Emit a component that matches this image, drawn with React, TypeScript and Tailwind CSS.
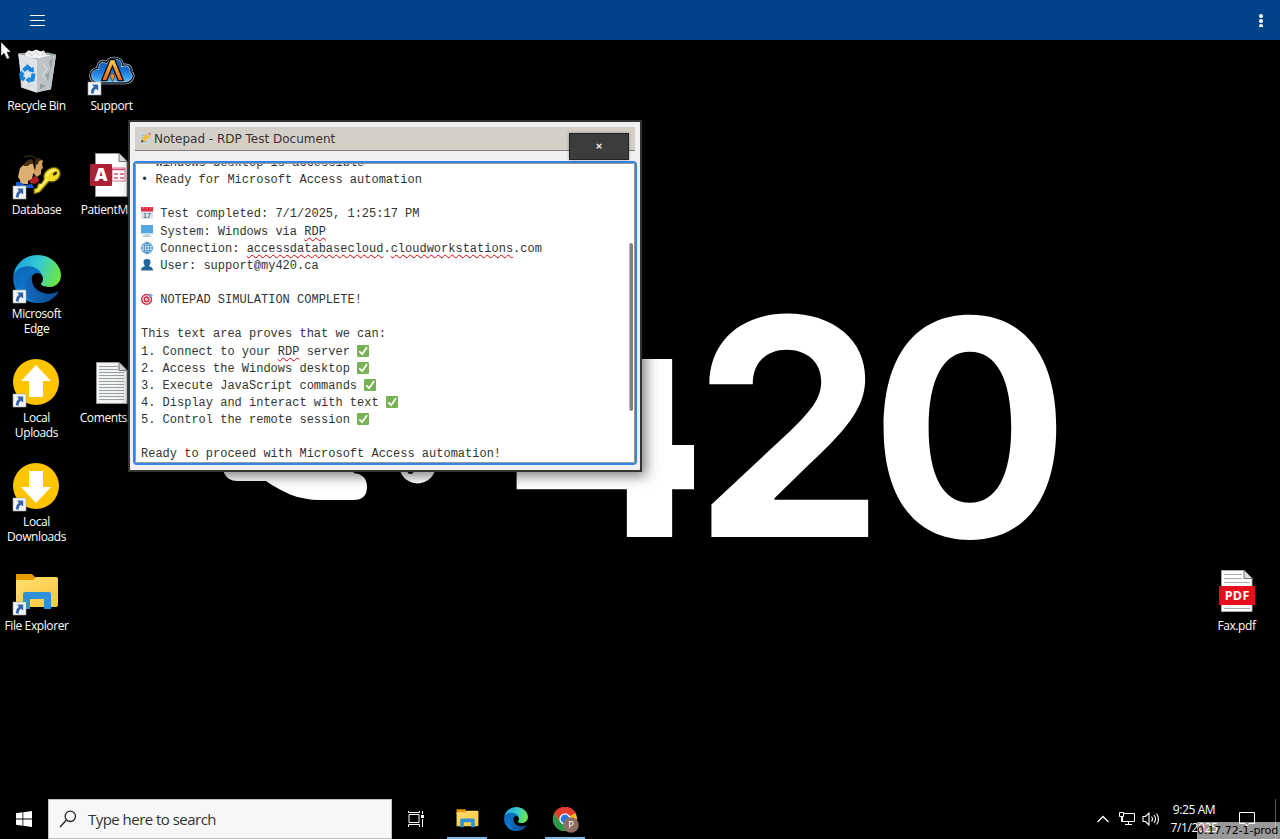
import React, { ReactNode } from "react";

const UI = "font-['Open_Sans','Noto_Sans',sans-serif]";

function Shortcut() {
  return (
    <g>
      <rect x="0" y="34" width="13" height="13" fill="#f4f6f9" stroke="#9aa0a6" strokeWidth=".6" />
      <path d="M4 36.5h6.2v6.2l-2.2-2c-1.8 1.2-2.3 2.6-2.2 4.8H3.2c-.5-3 .5-5.200 2.800-6.800z" fill="#2f64a8" />
    </g>
  );
}

function Icon({ children, size = 48 }: { children: ReactNode; size?: number }) {
  return (
    <svg width={size} height={size} viewBox="0 0 48 48" className="block shrink-0 overflow-visible">
      {children}
    </svg>
  );
}

function RecycleBin() {
  return (
    <Icon>
      <g transform="translate(1 1.500)">
        <path d="M5 5l6-1 3-3 6 1 4-1 5 2 6 1 7 2-5 34-15 3-15-5z" fill="#c9ced1" />
        <path d="M4 4l19 5v34L9 38z" fill="#dfe3e5" />
        <path d="M23 9l19-4-5 33-14 5z" fill="#bcc2c5" />
        <path d="M4 4l10-1 8 1 12-1 8 2-19 5z" fill="#9da4a8" />
        <path d="M11 4l4-3 3 1 4-2 4 2 4-1 2 4 5 1-12 3-9-1-5-2z" fill="#f1f3f4" />
        <path d="M14 3l4 3 4-4 3 4M30 2l-2 4" stroke="#c3c9cc" fill="none" />
        <path d="M29 14l4 6-5 6 5 4M8 12l5 2-3 4M19 36l-7 1" stroke="#d3d8da" strokeWidth="1.300" fill="none" />
        <path d="M35 12l4-4-2 13zM31 26l5-5-2 11zM26 34l6 2-6 4z" fill="#9aa1a5" />
        <g fill="none" stroke="#1683dc" strokeWidth="4">
          <path d="M9.500 21l4-3.500 3.500 3" />
          <path d="M19.500 24l-1 6-3 .5" />
          <path d="M10.500 30l-3-2v-4" />
        </g>
        <path d="M19.500 17l.5 6-6-1.500zM15.500 27v7l-4-3.500zM4.500 25l3-4 3.500 4z" fill="#1683dc" />
      </g>
    </Icon>
  );
}

function Support() {
  return (
    <Icon>
      <defs>
        <linearGradient id="cloud" x1="0" y1="0" x2="0" y2="1">
          <stop stopColor="#0c4fae" />
          <stop offset=".55" stopColor="#1977d8" />
          <stop offset="1" stopColor="#57c3ff" />
        </linearGradient>
        <linearGradient id="flare" x1="0" y1="0" x2="0" y2="1">
          <stop stopColor="#ffd34b" />
          <stop offset="1" stopColor="#f45d19" />
        </linearGradient>
      </defs>
      <g transform="translate(1.200 1.200) scale(.95)">
        <path d="M9 35.500C-1 34-1 21 9 20c0-7 5-9 9-6 5-8 18-5 17 3 7-2 10 3 9 7 5 4 1 11-6 11.500z" fill="url(#cloud)" stroke="#c7d9e8" strokeWidth="2.800" />
        <path d="M9 35.500C-1 34-1 21 9 20c0-7 5-9 9-6 5-8 18-5 17 3 7-2 10 3 9 7 5 4 1 11-6 11.500z" fill="none" stroke="#06101f" strokeWidth="1.500" />
        <path d="M13 33L22 11h5l9 22h-5.500l-6-15-6 15z" fill="url(#flare)" stroke="#101010" strokeWidth="1.400" />
        <path d="M24.500 25l2.500 3-2.500 6-2.500-6z" fill="#ff8b25" stroke="#111" strokeWidth=".5" />
      </g>
      <Shortcut />
    </Icon>
  );
}

function Database() {
  return (
    <Icon>
      <path d="M11 5c5-2 10-1 12 2" stroke="#44421d" fill="none" />
      <path d="M23 9l4-2 3 2-1 3 1 4-2 2v4l-4 3-3-3z" fill="#d2a262" />
      <path d="M22 7l4-1 3 2-3 1-1 3-2 1-1 5z" fill="#3d2710" />
      <path d="M7 16l6-5 7 0 1 5 1 4-2 2-1 5-4 2 0 3-8 0 0-4-2-3z" fill="#dcb070" />
      <path d="M11 12l4-4 4-1 2 5-4 0-2 2-4 0z" fill="#4c3215" />
      <path d="M17 28l5-4 3 2 1 3-4 3-5-1z" fill="#b32026" />
      <path d="M3 30l4 0 5 3 7-1 2 4H3z" fill="#155bd4" />
      <path d="M46 17.500c4 7-3 14-10 12L27 40l-6 2v-5l3-1 1-4 4-1 2-4c-2-8 9-15 15-9.500z" fill="#f0df24" stroke="#5d5207" strokeWidth="1.200" />
      <path d="M24 38l10-11M34 25c0-5 5-7 9-6.500" stroke="#fff689" strokeWidth="1.300" fill="none" />
      <ellipse cx="42" cy="21.500" rx="2.500" ry="1.600" fill="#332c05" transform="rotate(-35 42 21.500)" />
      <Shortcut />
    </Icon>
  );
}

function Page() {
  return (
    <>
      <path d="M7.500 1.500H31l8 8v35H7.500z" fill="#fff" stroke="#969696" />
      <path d="M31 1.500v8h8" fill="#dedede" stroke="#777" />
    </>
  );
}

function AccessFile() {
  return (
    <Icon>
      <Page />
      <rect x="24" y="16" width="13" height="13" fill="#fff" stroke="#e0708a" />
      <path d="M24 17.500h13M26 22h4M32 22h4M26 26h4M32 26h4" stroke="#db5676" strokeWidth="1.600" />
      <rect x="2" y="12" width="22" height="22" rx="1" fill="#ae2135" />
      <text x="13" y="29" textAnchor="middle" fontFamily="Open Sans" fontWeight="800" fontSize="18" fill="#fff">A</text>
    </Icon>
  );
}

function TextFile() {
  return (
    <Icon>
      <path d="M8.500 2.500H31l8 8v33H8.500z" fill="#f2f3f2" stroke="#999" />
      <path d="M31 2.500v8h8" fill="#d4d4d4" stroke="#777" />
      <path d="M11 6.500h19M11 9.500h19M11 12.500h25M11 15.500h25M11 18.500h25M11 21.500h25M11 24.500h25M11 27.500h25M11 30.500h25M11 33.500h25M11 36.500h25M11 39.500h25" stroke="#96a0a5" strokeWidth="1" />
    </Icon>
  );
}

function EdgeArt() {
  return (
    <g transform="scale(.1875)">
      <defs>
        <linearGradient id="edgeTop" x1="0" y1=".35" x2="1" y2=".6">
          <stop stopColor="#1ba2e2" />
          <stop offset=".5" stopColor="#35cbd0" />
          <stop offset="1" stopColor="#6fe83d" />
        </linearGradient>
        <linearGradient id="edgeLow" x1="0" y1="0" x2=".6" y2="1">
          <stop stopColor="#0f63ae" />
          <stop offset="1" stopColor="#0882e2" />
        </linearGradient>
        <linearGradient id="edgeDark" x1="0" y1="0" x2="1" y2="0">
          <stop stopColor="#1269b8" />
          <stop offset="1" stopColor="#0e4b94" />
        </linearGradient>
      </defs>
      <path d="M105.730 241.420A79.200 79.200 0 0 1 83 220.080a80.720 80.720 0 0 1 29.490-120.150c3.260-1.550 8.840-4.340 16.260-4.210a32.400 32.400 0 0 1 25.690 13 31.880 31.880 0 0 1 6.360 18.660c0-.21 24.460-79.600-80-79.600-43.900 0-80 41.660-80 78.210a130.150 130.150 0 0 0 12.110 56 128 128 0 0 0 156.380 67.110 75.550 75.550 0 0 1-63.560-7.680z" fill="url(#edgeLow)" />
      <path d="M235.680 195.460a93.730 93.730 0 0 1-10.540 4.710 101.870 101.870 0 0 1-35.900 6.460c-47.320 0-88.540-32.550-88.540-74.320A31.480 31.480 0 0 1 117.130 98c-42.800 1.800-53.800 46.400-53.800 72.530 0 73.880 68.090 85.370 82.760 85.370 7.910 0 19.840-2.300 27-4.560l1.310-.44a128.340 128.340 0 0 0 66.600-49.800 4 4 0 0 0-5.320-5.640z" fill="url(#edgeDark)" />
      <path d="M152.220 148.860c-.81 1.050-3.300 2.500-3.300 5.660 0 2.610 1.700 5.120 4.720 7.230 14.380 10 41.490 8.680 41.560 8.680a59.560 59.560 0 0 0 30.270-8.350A61.380 61.380 0 0 0 255.880 109.300c.26-22.410-8-37.310-11.340-43.910C223.460 23.840 177.720 0 128 0A128 128 0 0 0 0 126.200c.48-36.540 36.800-66.050 80-66.050 3.500 0 23.460.34 42 10.070 16.340 8.580 24.900 18.940 30.850 29.210 6.180 10.670 7.280 24.150 7.280 29.520s-2.740 13.330-7.910 19.910z" fill="url(#edgeTop)" />
    </g>
  );
}

function LocalIcon({ down }: { down?: boolean }) {
  return (
    <Icon>
      <circle cx="23" cy="22" r="23" fill="#ffc400" />
      <path d={down ? "M16 7h14v16h8L23 39 8 23h8z" : "M23 5l15 16h-8v16H16V21H8z"} fill="#fff" />
      <Shortcut />
    </Icon>
  );
}

function FolderArt() {
  return (
    <>
      <defs>
        <linearGradient id="folder" x1="0" y1="0" x2="1" y2="1">
          <stop stopColor="#ffdf70" />
          <stop offset="1" stopColor="#fac63e" />
        </linearGradient>
      </defs>
      <path d="M3 7c0-1 .5-1 1-1h15l4 4v6H3z" fill="#e69b05" />
      <path d="M3 12h17l3-3h20q2 0 2 2v26q0 2-2 2H3z" fill="url(#folder)" />
      <path d="M10 41V26q0-2 2-2h24q2 0 2 2v15h-7V31H17v10z" fill="#2f91d8" />
    </>
  );
}

function PdfFile() {
  return (
    <Icon>
      <path d="M8.500 2.500H31l8 8v33H8.500z" fill="#fff" stroke="#aaa" />
      <path d="M31 2.500v8h8" fill="#ddd" stroke="#777" />
      <path d="M11 6.500h18M11 10.500h18M11 14.500h26M11 40.500h26" stroke="#a6abad" />
      <rect x="6" y="18" width="36" height="19" fill="#e60d1c" />
      <text x="24" y="32" textAnchor="middle" fontFamily="Open Sans" fontWeight="700" fontSize="12.500" fill="#fff" textLength="24.500">PDF</text>
    </Icon>
  );
}

const items: { pos: string; icon: ReactNode; label: string[] }[] = [
  { pos: "left-0 top-[48px]", icon: <RecycleBin />, label: ["Recycle Bin"] },
  { pos: "left-[75px] top-[48px]", icon: <Support />, label: ["Support"] },
  { pos: "left-0 top-[152px]", icon: <Database />, label: ["Database"] },
  { pos: "left-[75px] top-[152px]", icon: <AccessFile />, label: ["PatientMa..."] },
  { pos: "left-0 top-[256px]", icon: <Icon><g transform="translate(0 -1)"><EdgeArt /></g><Shortcut /></Icon>, label: ["Microsoft", "Edge"] },
  { pos: "left-0 top-[360px]", icon: <LocalIcon />, label: ["Local", "Uploads"] },
  { pos: "left-[75px] top-[360px]", icon: <TextFile />, label: ["Coments.txt"] },
  { pos: "left-0 top-[464px]", icon: <LocalIcon down />, label: ["Local", "Downloads"] },
  { pos: "left-0 top-[568px]", icon: <Icon><FolderArt /><Shortcut /></Icon>, label: ["File Explorer"] },
  { pos: "left-[1200px] top-[568px]", icon: <PdfFile />, label: ["Fax.pdf"] },
];

function Wallpaper() {
  return (
    <svg className="absolute left-0 top-0" width="1280" height="839" viewBox="0 0 1280 839" fill="#fff">
      <defs>
        <clipPath id="stem"><rect x="500" y="359" width="194" height="190" /></clipPath>
      </defs>
      <path d="M224 465v8q4 8 13 8h29c16 11 32 19 54 19h33q14 0 14-13t-14-14l10-9z" />
      <circle cx="417.500" cy="465" r="18.500" />
      <circle cx="410.500" cy="471" r="3" fill="#000" />
      <g fontFamily="Inter" fontWeight="700" fontSize="303">
        <g clipPath="url(#stem)"><text transform="translate(501 537) scale(1.045 1.216)">4</text></g>
        <text transform="translate(693 537) scale(1.005 1)">2</text>
        <text transform="translate(870 537) scale(.978 .995)">0</text>
      </g>
    </svg>
  );
}

function Emoji({ kind }: { kind: string }) {
  const art: Record<string, ReactNode> = {
    memo: (
      <>
        <rect x="0" y="1" width="12" height="14" fill="#cbd8e0" />
        <path d="M2 4h8M2 7h5M2 12h8" stroke="#91a8b5" />
        <path d="M4 8l6-6 3.500 3.500-6 6-5 2z" fill="#f6bd35" />
        <path d="M11.500 1.500l1-1 2.500 2.500-1 1.500z" fill="#e45b6d" />
        <path d="M3.500 9.500L2.500 13.500 6 12z" fill="#564738" />
      </>
    ),
    date: (
      <>
        <rect x="0" y="2" width="15" height="13" rx="1" fill="#dce5ea" />
        <path d="M0 0h15v5.500H0z" fill="#dd2e44" />
        <path d="M3 0v2M7.500 0v2M12 0v2" stroke="#f4a4ae" />
        <text x="7.500" y="13.500" textAnchor="middle" fontFamily="Liberation Sans" fontWeight="700" fontSize="9" fill="#66757f">17</text>
      </>
    ),
    pc: (
      <>
        <rect x="0" y="0" width="15" height="10.500" fill="#54a7e5" />
        <path d="M0 10.500h15v1.500H0z" fill="#cdd9e2" />
        <path d="M5 12h5v1h3v2H2v-2h3z" fill="#b9cad6" />
      </>
    ),
    globe: (
      <g fill="none" stroke="#3b88c3" strokeWidth="1.200">
        <circle cx="7.500" cy="7.500" r="6.800" />
        <ellipse cx="7.500" cy="7.500" rx="3.500" ry="6.800" />
        <path d="M7.500 1v13M1 7.500h13M2 4h11M2 11h11" />
      </g>
    ),
    user: <path d="M4 1q4-2 7 0c2 3 0 6-1 8 3 .5 5 2 5 5.500H0c0-3.500 2-5 5-5.500-1-2-3-5-1-8z" fill="#226699" />,
    target: (
      <>
        <circle cx="7" cy="8" r="7" fill="#dd2e44" />
        <circle cx="7" cy="8" r="5.200" fill="#fff" />
        <circle cx="7" cy="8" r="3.800" fill="#dd2e44" />
        <circle cx="7" cy="8" r="1.800" fill="#fff" />
        <path d="M7 8l5-5" stroke="#66757f" strokeWidth="1.200" />
        <path d="M10 4V2l2-2 1 2 2 1-2 2h-2z" fill="#55acee" />
      </>
    ),
    check: (
      <>
        <rect width="15" height="15" rx="1.500" fill="#77b255" />
        <path d="M3.500 8.500l3 3L12 3.500" stroke="#fff" strokeWidth="2.200" fill="none" strokeLinecap="round" />
      </>
    ),
  };
  return (
    <svg className="mt-px block h-[12px] w-[12px] shrink-0" viewBox="0 0 15 15">
      {art[kind]}
    </svg>
  );
}

function Typo({ children }: { children: string }) {
  return <span className="underline decoration-[#e60000] decoration-wavy decoration-1 underline-offset-[2px] [text-decoration-skip-ink:none]">{children}</span>;
}

function Line({ icon, end, tall, children }: { icon?: string; end?: boolean; tall?: boolean; children?: ReactNode }) {
  return (
    <div className={`flex shrink-0 items-start whitespace-pre ${tall ? "h-[18px]" : "h-[17px]"}`}>
      {icon && <Emoji kind={icon} />}
      <span>{icon ? " " : ""}{children}{end ? " " : ""}</span>
      {end && <Emoji kind="check" />}
    </div>
  );
}

function Notepad() {
  return (
    <section className="absolute left-[128px] top-[120px] flex h-[352px] w-[514px] flex-col border-2 border-[#333] bg-[#f0f0f0] px-[5px] pt-[5px] shadow-[4px_4px_12px_rgba(0,0,0,0.5)]">
      <header className="flex h-[24px] shrink-0 items-start border-b border-[#808080] bg-[#d4d0c8] pl-[4px] font-['DejaVu_Sans',sans-serif] text-[12px] leading-[25px] text-[#333]">
        <div className="mt-[4px] flex"><Emoji kind="memo" /></div>
        <h1 className="ml-[3px] whitespace-nowrap">Notepad - RDP Test Document</h1>
      </header>
      <button className="absolute left-[439px] top-[11px] flex h-[27px] w-[60px] items-center justify-center border border-[#222] bg-[#3c3c3c] font-['DejaVu_Sans',sans-serif] text-[9px] font-bold text-white shadow-[0_0_3px_rgba(0,0,0,0.3)]">×</button>
      <div className="-mx-[2px] mt-[10px] h-[304px] shrink-0 rounded-[4px] border-2 border-[#3584e4] bg-white">
        <div className="flex h-full justify-between overflow-hidden rounded-[2px] border border-[#999] pl-[5px]">
          <div className="-mt-[9px] font-['Liberation_Mono',monospace] text-[12px] leading-[17px] text-[#333]">
            <Line>• Windows desktop is accessible</Line>
            <Line>• Ready for Microsoft Access automation</Line>
            <Line />
            <Line icon="date" tall>Test completed: 7/1/2025, 1:25:17 PM</Line>
            <Line icon="pc">System: Windows via <Typo>RDP</Typo></Line>
            <Line icon="globe">Connection: <Typo>accessdatabasecloud</Typo>.<Typo>cloudworkstations</Typo>.com</Line>
            <Line icon="user">User: support@my420.ca</Line>
            <Line />
            <Line icon="target">NOTEPAD SIMULATION COMPLETE!</Line>
            <Line />
            <Line tall>This text area proves that we can:</Line>
            <Line end>1. Connect to your <Typo>RDP</Typo> server</Line>
            <Line end>2. Access the Windows desktop</Line>
            <Line end>3. Execute JavaScript commands</Line>
            <Line end>4. Display and interact with text</Line>
            <Line end>5. Control the remote session</Line>
            <Line />
            <Line>Ready to proceed with Microsoft Access automation!</Line>
          </div>
          <div className="mr-px mt-[79px] h-[168px] w-[4px] rounded-full border-l border-[#b5b9b9] bg-[#7c8282]" />
        </div>
      </div>
    </section>
  );
}

function Chrome() {
  return (
    <svg width="26" height="27" viewBox="0 0 26 27" className="overflow-visible">
      <circle cx="12" cy="12" r="12" fill="#fbc116" />
      <path d="M12 12L1.600 6A12 12 0 0 1 22.400 6z" fill="#e33b2e" />
      <path d="M1.600 6A12 12 0 0 0 12 24l5.200-9H6.800z" fill="#259b49" />
      <path d="M12 6.500h10.700A12 12 0 0 0 1.600 6l5.200 9z" fill="#e33b2e" />
      <circle cx="12" cy="12" r="5.700" fill="#fff" />
      <circle cx="12" cy="12" r="4.400" fill="#2979e8" />
      <circle cx="18" cy="18" r="7.800" fill="#8d6e63" />
      <text x="18" y="21.300" textAnchor="middle" fontFamily="Open Sans" fontSize="9.500" fill="#fff">P</text>
    </svg>
  );
}

function Taskbar() {
  return (
    <footer className="relative flex h-[40px] items-stretch bg-black text-white">
      <div className="flex w-[48px] items-center justify-center">
        <svg width="16" height="16" viewBox="0 0 16 16" fill="#fff"><path d="M0 2.200L6.500 1.300v6.200H0zM7.300 1.200L16 0v7.500H7.300zM0 8.500h6.500v6.200L0 13.800zM7.300 8.500H16V16l-8.700-1.200z" /></svg>
      </div>
      <div className="flex w-[344px] items-center border border-[#bdbdbd] bg-[#f7f7f7] pl-[10px] text-[#333]">
        <svg width="18" height="18" viewBox="0 0 18 18" fill="none" stroke="#222" strokeWidth="1.300"><circle cx="11.300" cy="6.300" r="5.200" /><path d="M7.500 10L1 17" /></svg>
        <span className={`ml-[11px] text-[15px] tracking-[-0.53px] ${UI}`}>Type here to search</span>
      </div>
      <div className="flex w-[48px] items-center justify-center">
        <svg width="17" height="16" viewBox="0 0 17 16" fill="none" stroke="#fff"><path d="M1 3.500h10v8H1zM.5 0v1.500h11V0M.5 16v-2.500h11V16M14.500 0v3M14.500 8v8" /><rect x="13" y="4" width="3" height="3" fill="#fff" stroke="none" /></svg>
      </div>
      <div className="ml-[7px] flex w-[40px] items-center justify-center border-b-2 border-[#76b9ed]">
        <Icon size={25}><FolderArt /></Icon>
      </div>
      <div className="ml-[8px] flex w-[42px] items-center justify-center"><Icon size={24}><EdgeArt /></Icon></div>
      <div className="ml-[8px] flex w-[40px] items-center justify-center border-b-2 border-[#76b9ed] pl-[1px] pt-[4px]"><Chrome /></div>
      <div className="ml-auto flex items-center">
        <svg width="12" height="8" viewBox="0 0 12 8" fill="none" stroke="#fff" strokeWidth="1.300"><path d="M.5 7L6 1.500 11.500 7" /></svg>
        <svg className="ml-[10px]" width="17" height="14" viewBox="0 0 17 14" fill="none" stroke="#fff"><path d="M5 1.500h10.500v8h-12V5M.5.5h4v4h-4zM2.500 5v5M9.500 10v2.500M6 12.500h7" /></svg>
        <svg className="ml-[6px]" width="18" height="14" viewBox="0 0 18 14" fill="none" stroke="#fff" strokeWidth="1.100"><path d="M1 4.500h2.500L7 1v12L3.500 9.500H1zM9.500 4.500q2 2.500 0 5M12 3q3 4 0 8M14.500 1.500q4 5.500 0 11" /></svg>
      </div>
      <div className={`ml-[9px] flex w-[50px] flex-col items-center whitespace-nowrap pt-[2px] text-[12px] leading-[18px] tracking-[-0.4px] ${UI}`}>
        <span>9:25 AM</span>
        <span>7/1/2025</span>
      </div>
      <div className="ml-[20px] flex w-[41px] items-center">
        <svg width="16" height="17" viewBox="0 0 16 17" fill="none" stroke="#fff"><path d="M.5 1.500h15v11H10L8 15l-2-2.500H.5z" /></svg>
      </div>
      <div className="absolute right-[4px] top-0 h-full w-px bg-[#555]" />
      <div className="absolute bottom-0 right-0 flex h-[17px] w-[83px] items-center justify-start whitespace-nowrap bg-white/60 pt-[2px] font-['DejaVu_Sans',sans-serif] text-[11px] tracking-[-0.05px] text-black">0.17.72-1-prod</div>
    </footer>
  );
}

export default function App() {
  return (
    <div className="relative flex h-[839px] w-[1280px] flex-col overflow-hidden bg-black">
      <header className="flex h-[40px] shrink-0 items-center justify-between bg-[#004389] pl-[30px] pr-[17px]">
        <svg width="15" height="12" viewBox="0 0 15 12" stroke="#fff"><path d="M0 1.500h15M0 6.500h15M0 11.500h15" /></svg>
        <svg width="4" height="14" viewBox="0 0 4 14" fill="#fff"><circle cx="2" cy="3" r="2" /><circle cx="2" cy="8" r="2" /><circle cx="2" cy="13" r="2" /></svg>
      </header>
      <main className="flex-1">
        <Wallpaper />
        {items.map((item) => (
          <div key={item.label.join(" ")} className={`absolute flex w-[74px] flex-col items-center ${item.pos}`}>
            {item.icon}
            <div className={`mt-[2px] -ml-px text-center text-[12px] leading-[15px] tracking-[-0.4px] whitespace-nowrap text-white ${UI}`}>
              {item.label.map((row) => <div key={row}>{row}</div>)}
            </div>
          </div>
        ))}
        <Notepad />
        <svg className="absolute left-0 top-[41px]" width="13" height="19" viewBox="0 0 13 19"><path d="M1 1v14l3-3 3 6 2.500-1L7 11h4z" fill="#fff" stroke="#222" strokeWidth=".5" /></svg>
      </main>
      <Taskbar />
    </div>
  );
}
